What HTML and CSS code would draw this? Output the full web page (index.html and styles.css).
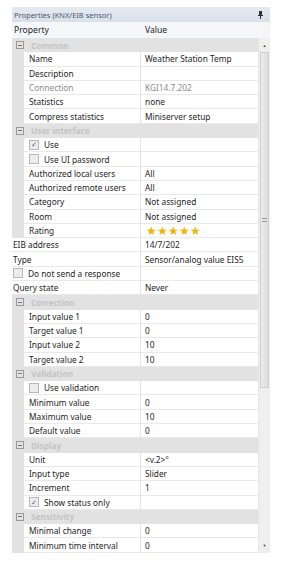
FILE: index.html
```html
<!DOCTYPE html>
<html>
<head>
    <title>Properties (KNX/EIB sensor)</title>
    <link rel="stylesheet" href="styles.css">
</head>
<body>
<div class="panel">
    <div class="title">
        <span>Properties (KNX/EIB sensor)</span>
        <svg class="pin" width="7" height="8" viewBox="0 0 7 8"><path d="M2 0h3v4h1v1H4v3H3V5H1V4h1z" fill="#333"/></svg>
    </div>
    <div class="header">
        <div class="hname">Property</div>
        <div class="hval">Value</div>
    </div>
    <div class="body">
        <div class="grid">
            <div class="row cat"><span class="box"></span><span class="clabel">Common</span></div>
            <div class="row"><div class="gut"></div><div class="name">Name</div><div class="val">Weather Station Temp</div></div>
            <div class="row"><div class="gut"></div><div class="name">Description</div><div class="val"></div></div>
            <div class="row dim"><div class="gut"></div><div class="name">Connection</div><div class="val">KGI14.7.202</div></div>
            <div class="row"><div class="gut"></div><div class="name">Statistics</div><div class="val">none</div></div>
            <div class="row"><div class="gut"></div><div class="name">Compress statistics</div><div class="val">Miniserver setup</div></div>

            <div class="row cat"><span class="box"></span><span class="clabel">User interface</span></div>
            <div class="row"><div class="gut"></div><div class="name"><span class="check on">&#10003;</span>Use</div><div class="val"></div></div>
            <div class="row"><div class="gut"></div><div class="name"><span class="check"></span>Use UI password</div><div class="val"></div></div>
            <div class="row"><div class="gut"></div><div class="name">Authorized local users</div><div class="val">All</div></div>
            <div class="row"><div class="gut"></div><div class="name">Authorized remote users</div><div class="val">All</div></div>
            <div class="row"><div class="gut"></div><div class="name">Category</div><div class="val">Not assigned</div></div>
            <div class="row"><div class="gut"></div><div class="name">Room</div><div class="val">Not assigned</div></div>
            <div class="row"><div class="gut"></div><div class="name">Rating</div><div class="val stars">&#9733;&#9733;&#9733;&#9733;&#9733;</div></div>

            <div class="row"><div class="name top">EIB address</div><div class="val">14/7/202</div></div>
            <div class="row"><div class="name top">Type</div><div class="val">Sensor/analog value EIS5</div></div>
            <div class="row"><div class="name top"><span class="check"></span>Do not send a response</div><div class="val"></div></div>
            <div class="row"><div class="name top">Query state</div><div class="val">Never</div></div>

            <div class="row cat"><span class="box"></span><span class="clabel">Correction</span></div>
            <div class="row"><div class="gut"></div><div class="name">Input value 1</div><div class="val">0</div></div>
            <div class="row"><div class="gut"></div><div class="name">Target value 1</div><div class="val">0</div></div>
            <div class="row"><div class="gut"></div><div class="name">Input value 2</div><div class="val">10</div></div>
            <div class="row"><div class="gut"></div><div class="name">Target value 2</div><div class="val">10</div></div>

            <div class="row cat"><span class="box"></span><span class="clabel">Validation</span></div>
            <div class="row"><div class="gut"></div><div class="name"><span class="check"></span>Use validation</div><div class="val"></div></div>
            <div class="row"><div class="gut"></div><div class="name">Minimum value</div><div class="val">0</div></div>
            <div class="row"><div class="gut"></div><div class="name">Maximum value</div><div class="val">10</div></div>
            <div class="row"><div class="gut"></div><div class="name">Default value</div><div class="val">0</div></div>

            <div class="row cat"><span class="box"></span><span class="clabel">Display</span></div>
            <div class="row"><div class="gut"></div><div class="name">Unit</div><div class="val">&lt;v.2&gt;&deg;</div></div>
            <div class="row"><div class="gut"></div><div class="name">Input type</div><div class="val">Slider</div></div>
            <div class="row"><div class="gut"></div><div class="name">Increment</div><div class="val">1</div></div>
            <div class="row"><div class="gut"></div><div class="name"><span class="check on">&#10003;</span>Show status only</div><div class="val"></div></div>

            <div class="row cat"><span class="box"></span><span class="clabel">Sensitivity</span></div>
            <div class="row"><div class="gut"></div><div class="name">Minimal change</div><div class="val">0</div></div>
            <div class="row"><div class="gut"></div><div class="name">Minimum time interval</div><div class="val">0</div></div>
        </div>
        <div class="scroll">
            <div class="arrow">&#9650;</div>
            <div class="track">
                <div class="thumb"><span class="grip"></span></div>
            </div>
            <div class="arrow">&#9660;</div>
        </div>
    </div>
</div>
</body>
</html>
```

FILE: styles.css
```css
body {
    margin: 0;
    background: #fff;
    font-family: "Noto Sans", "Open Sans", sans-serif;
    font-size: 8.3px;
    color: #1e1e1e;
}
.panel {
    margin: 7px 0 0 12px;
    width: 258px;
}
.title {
    height: 15px;
    display: flex;
    align-items: center;
    justify-content: space-between;
    padding: 0 6px 0 2px;
    background: linear-gradient(#e4eaf2, #d8e0ea);
    color: #4b5868;
    font-size: 7.5px;
}
.header {
    height: 16px;
    display: flex;
    align-items: center;
    background: #f4f6f8;
    font-size: 8.6px;
}
.hname {
    width: 127px;
    padding-left: 2px;
}
.hval {
    padding-left: 4px;
}
.body {
    display: flex;
}
.grid {
    width: 247px;
}
.row {
    height: 14.3px;
    display: flex;
    align-items: stretch;
}
.gut {
    width: 12px;
    background: #e2e2e2;
}
.name {
    width: 117px;
    display: flex;
    align-items: center;
    padding-left: 5px;
    border-right: 1px solid #e4e4e4;
    border-bottom: 1px solid #e9e9e9;
    box-sizing: border-box;
}
.name.top {
    width: 129px;
    padding-left: 1px;
}
.val {
    flex: 1;
    display: flex;
    align-items: center;
    padding-left: 4px;
    border-bottom: 1px solid #e9e9e9;
}
.dim {
    color: #8a8a8a;
}
.cat {
    background: #e2e2e2;
    align-items: center;
}
.box {
    position: relative;
    width: 6px;
    height: 6px;
    margin-left: 4px;
    border: 1px solid #9a9a9a;
}
.box::after {
    content: "";
    position: absolute;
    left: 1px;
    right: 1px;
    top: 2.5px;
    height: 1px;
    background: #777;
}
.clabel {
    margin-left: 7px;
    color: #c4c4c4;
    font-weight: bold;
}
.check {
    width: 8px;
    height: 8px;
    border: 1px solid #b8b8b8;
    background: #ececec;
    margin-right: 5px;
    display: flex;
    align-items: center;
    justify-content: center;
    font-size: 7px;
    color: #3e64ad;
}
.stars {
    color: #f2b300;
    font-size: 11.5px;
    letter-spacing: 0;
    padding-left: 5px;
}
.scroll {
    width: 11px;
    display: flex;
    flex-direction: column;
    background: #efefef;
    border-left: 1px solid #e4e4e4;
}
.arrow {
    height: 14px;
    font-size: 4px;
    color: #444;
    display: flex;
    align-items: center;
    justify-content: center;
}
.track {
    flex: 1;
}
.thumb {
    height: 334px;
    margin: 0 1px;
    background: linear-gradient(90deg, #ececec, #dedede);
    border: 1px solid #cfcfcf;
    display: flex;
    align-items: center;
    justify-content: center;
}
.grip {
    width: 5px;
    height: 4px;
    border-top: 1px solid #9a9a9a;
    border-bottom: 1px solid #9a9a9a;
    box-sizing: border-box;
}
```
